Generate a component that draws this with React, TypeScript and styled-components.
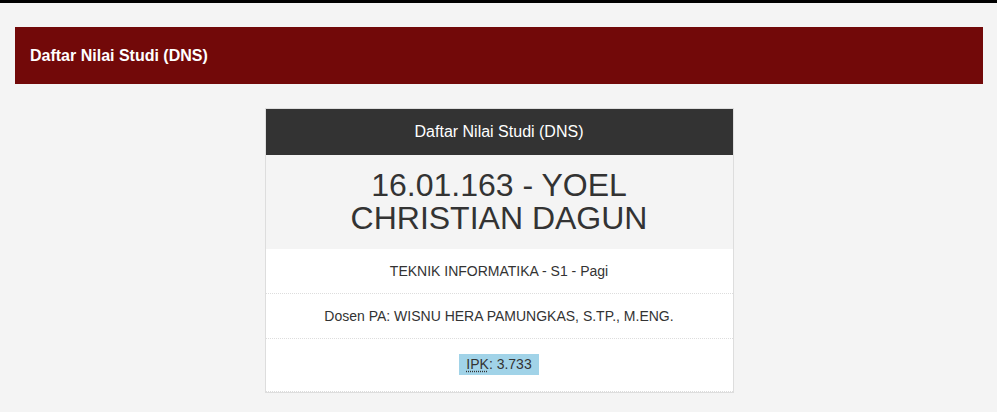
import React from 'react';
import styled, { createGlobalStyle } from 'styled-components';

const GlobalStyle = createGlobalStyle`
  html, body {
    margin: 0;
    padding: 0;
    background: #f4f4f4;
    font-family: "Liberation Sans", Arial, sans-serif;
    color: #333;
  }
  * {
    box-sizing: border-box;
  }
`;

const TopBar = styled.div`
  height: 3px;
  background: #000;
`;

const Page = styled.div`
  padding: 24px 14px 20px 15px;
`;

const PageHeader = styled.div`
  height: 57px;
  background: #720909;
  display: flex;
  align-items: center;
  padding-left: 15px;
  color: #fff;
  font-size: 16px;
  font-weight: bold;
`;

const Card = styled.div`
  width: 469px;
  margin: 24px auto 0;
  border: 1px solid #ddd;
  background: #fff;
`;

const CardHeader = styled.div`
  height: 46px;
  background: #333;
  color: #fff;
  font-size: 16px;
  display: flex;
  align-items: center;
  justify-content: center;
`;

const NameBlock = styled.div`
  background: #f4f4f4;
  padding: 14px 60px;
`;

const Name = styled.h2`
  margin: 0;
  font-size: 32px;
  font-weight: normal;
  line-height: 33px;
  text-align: center;
  color: #333;
`;

const Row = styled.div`
  padding: 12px;
  line-height: 20px;
  font-size: 14px;
  text-align: center;
  border-bottom: 1px dotted #ddd;
`;

const IpkRow = styled(Row)`
  padding: 15px 12px 16px;
  display: flex;
  justify-content: center;
`;

const Label = styled.span`
  display: inline-block;
  background: #a1d3e8;
  padding: 2px 7px 3px;
  line-height: 16px;
  font-size: 14px;
`;

const Abbr = styled.abbr`
  text-decoration: underline dotted;
  text-underline-offset: 2px;
  cursor: help;
`;

const App = () => {
  return (
    <>
      <GlobalStyle />
      <TopBar />
      <Page>
        <PageHeader>Daftar Nilai Studi (DNS)</PageHeader>
        <Card>
          <CardHeader>Daftar Nilai Studi (DNS)</CardHeader>
          <NameBlock>
            <Name>16.01.163 - YOEL CHRISTIAN DAGUN</Name>
          </NameBlock>
          <Row>TEKNIK INFORMATIKA - S1 - Pagi</Row>
          <Row>Dosen PA: WISNU HERA PAMUNGKAS, S.TP., M.ENG.</Row>
          <IpkRow>
            <Label>
              <Abbr title="Indeks Prestasi Kumulatif">IPK</Abbr>: 3.733
            </Label>
          </IpkRow>
        </Card>
      </Page>
    </>
  );
};

export default App;
